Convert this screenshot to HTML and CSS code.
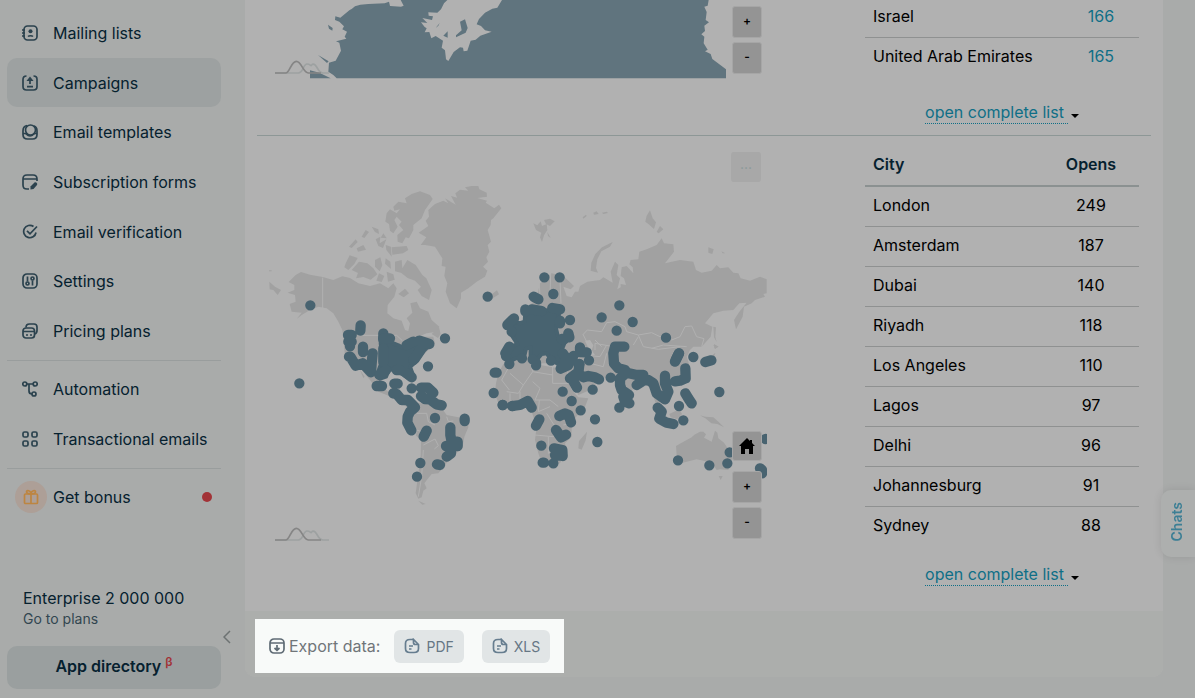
FILE: index.html
```
<!DOCTYPE html>
<html lang="en">
<head>
    <meta charset="UTF-8">
    <meta name="viewport" content="width=device-width, initial-scale=1.0">
    <title>Campaign statistics</title>
    <link rel="stylesheet" href="styles.css">
</head>
<body>
    <div class="layout">
        <aside class="sidebar">
            <nav>
                <div class="menu menu-main">
                    <a class="menu-item" href="#">
                        <svg class="icon" viewBox="0 0 16 16"><rect x="2" y="1" width="13" height="14" rx="3.5"/><path d="M0 5h3M0 8h3M0 11h3M6 11.5c1-1 4-1 5 0"/><circle cx="8.5" cy="6.2" r="2" class="solid"/></svg>
                        Mailing lists
                    </a>
                    <a class="menu-item active" href="#">
                        <svg class="icon" viewBox="0 0 16 16"><path d="M4.5 1C2 1 1 2.200 1 4.500v7C1 14 2 15 4.500 15h7c2.500 0 3.500-1 3.500-3.500v-7C15 2.200 14 1 11.500 1M8 9V3M5 11.700h6"/><path class="solid" d="M8 1.500l3.500 4.500h-7z"/></svg>
                        Campaigns
                    </a>
                    <a class="menu-item" href="#">
                        <svg class="icon" viewBox="0 0 16 16"><circle cx="8.500" cy="6" r="5"/><path d="M5 1.500C2 2 1 4 1 7v3.500C1 14 2.500 15 5.500 15h5c3 0 4.500-1 4.500-4.500V7c0-2.500-1-4.500-3-5M1 9.500h2.500c1 0 1.500 2.500 4.500 2.500s3.500-2.500 4.500-2.500H15"/></svg>
                        Email templates
                    </a>
                    <a class="menu-item" href="#">
                        <svg class="icon" viewBox="0 0 16 16"><path d="M7 15H5c-3 0-4-1-4-4V5c0-3 1-4 4-4h6c3 0 4 1 4 4v2M1 5h14"/><path class="solid" d="M8.500 15.500v-3l4-4c1.500-1 3.500 1 2.500 2.500l-3.500 4z"/></svg>
                        Subscription forms
                    </a>
                    <a class="menu-item" href="#">
                        <svg class="icon" viewBox="0 0 16 16"><path d="M11.500 2.500A6.200 6.200 0 1 0 14 8.500M5 6.800l3 3L15 2.500"/></svg>
                        Email verification
                    </a>
                    <a class="menu-item" href="#">
                        <svg class="icon" viewBox="0 0 16 16"><rect x="1" y="1" width="14" height="14" rx="4"/><path d="M5.500 3.500v5M10.500 7.500v5"/><circle cx="5.500" cy="10.500" r="1.500"/><circle cx="10.500" cy="5.500" r="1.500"/></svg>
                        Settings
                    </a>
                    <a class="menu-item" href="#">
                        <svg class="icon" viewBox="0 0 16 16"><rect x="1" y="5" width="11.500" height="10" rx="3"/><path d="M4 4.500C4 2 5 1 7.500 1H12c2 0 3 1 3 3v3.500c0 2-.5 3-2.300 3.500M1 8.500h11.500M4 12h2M8 12h2"/></svg>
                        Pricing plans
                    </a>
                </div>
                <div class="menu">
                    <a class="menu-item" href="#">
                        <svg class="icon" viewBox="0 0 16 16"><circle cx="2.800" cy="3" r="2"/><circle cx="13.200" cy="3" r="2"/><circle cx="12" cy="13" r="2"/><path d="M5 3h6M7 3v7c0 2 1 3 3 3"/></svg>
                        Automation
                    </a>
                    <a class="menu-item" href="#">
                        <svg class="icon" viewBox="0 0 16 16"><rect x="1" y="1" width="5" height="5" rx="1.500"/><rect x="10" y="1" width="5" height="5" rx="1.500"/><rect x="1" y="10" width="5" height="5" rx="1.500"/><rect x="10" y="10" width="5" height="5" rx="1.500"/></svg>
                        Transactional emails
                    </a>
                </div>
                <div class="menu">
                    <a class="menu-item bonus" href="#">
                        <span class="bonus-icon"><svg class="icon" viewBox="0 0 16 16"><rect x="1.500" y="5" width="13" height="9.500" rx="1"/><path d="M8 5v9.500M8 5C6.500 5 3.500 4.500 3.500 2.800S7.500 1 8 5c.5-4 4.500-4 4.500-2.200S9.500 5 8 5"/></svg></span>
                        Get bonus
                        <span class="red-dot"></span>
                    </a>
                </div>
            </nav>
            <div class="plan">
                <div class="plan-name">Enterprise 2 000 000</div>
                <a class="plan-link" href="#">Go to plans</a>
                <button class="collapse" type="button" aria-label="Collapse menu">
                    <svg viewBox="0 0 8 14"><path d="M7 1L1 7l6 6"/></svg>
                </button>
            </div>
            <button class="app-directory" type="button">App directory <sup>β</sup></button>
        </aside>

        <main class="report">
            <section class="row">
                <div class="map-col">
                    <div class="map">
                        <svg class="map-svg" viewBox="42 0 1494 237">
                            <path class="zone" d="M245 235L235 225 220 215 222 188 242 182 258 152 253 128 243 124 274 116 269 110 276 95 262 88 267 79 253 65 240 60 241 49 256 53 284 30 290 27 300 19 316 14 340 12 389 10 402 5 405 18 438 20 446 17 437 0H577L567 10 558 28 547 38 520 37 521 47 534 49 531 60 502 54 517 69 498 67 509 81 515 85 509 97 523 96 529 115 542 108 564 122 560 143 570 151 573 178 580 183 596 156 615 142 624 143 626 154 637 152 647 122 662 119 676 107 710 95 690 91 678 78 665 73 672 57 690 38 712 26 727 23 741 0H1361L1358 17 1348 20 1355 36 1352 60 1362 67 1348 77 1350 93 1339 103 1348 110 1346 130 1358 149 1350 154 1367 162 1372 177 1413 208V235ZM165 235V211L193 218 227 235ZM189 165L221 184 216 189ZM219 74L233 84 232 92 222 86ZM565 107L578 94V113Z"/>
                            <path class="zone" d="M615 65L630 58 638 84 632 98 603 112 603 106 620 91ZM542 84L554 69 550 77Z"/>
                            <path class="squiggle" d="M60 219h70c15 0 14-27 26-27s10 10 16 1c15-5 14 26 32 26h18"/>
                            <path class="squiggle dark" d="M60 219h32c12 0 16-35 32-35s20 35 36 35h38"/>
                        </svg>
                        <div class="zoom-control">
                            <button class="map-btn" type="button">+</button>
                            <button class="map-btn" type="button">-</button>
                        </div>
                    </div>
                </div>
                <div class="table-col">
                    <table class="stats countries">
                        <tbody>
                            <tr><td>Israel</td><td><a href="#">166</a></td></tr>
                            <tr><td>United Arab Emirates</td><td><a href="#">165</a></td></tr>
                        </tbody>
                    </table>
                    <div class="more"><a class="more-link" href="#">open complete list</a><span class="caret"></span></div>
                </div>
            </section>

            <section class="row">
                <div class="map-col">
                    <div class="map">
                        <svg class="map-svg" viewBox="42 6 1494 1176">
                            <!-- North America and Greenland -->
                            <g class="land">
                                <path d="M101 396L122 375 138 366 165 374 203 381 235 390 262 379 285 384 310 400 345 408 375 400 400 415 415 400 425 415 418 440 398 465 397 490 415 505 440 512 450 540 460 543 465 520 455 505 472 488 466 460 485 455 495 475 520 485 530 510 553 530 545 545 515 550 490 560 535 560 540 580 500 620 470 655 480 690 462 690 430 665 400 665 380 690 380 710 400 725 420 700 425 740 450 755 480 770 460 775 420 745 370 725 345 690 320 660 290 650 270 620 265 560 262 540 250 515 235 490 215 475 190 470 165 480 140 495 125 507 140 488 110 485 104 462 122 455 120 435 98 428 118 420 118 405Z"/>
                                <path d="M43 395L60 410 78 420 68 435 55 420 44 418ZM42 361h8v3h-8ZM315 660l14 20-4 4ZM530 552l22-20 5 20-8 12ZM706 436l20-15 6 12-22 14Z"/>
                                <path d="M491 248L520 228 512 212 522 200 520 180 540 162 565 152 580 160 570 145 602 164 588 138 606 143 601 130 615 119 640 122 630 112 650 108 670 108 673 118 695 128 696 140 667 144 696 152 692 158 718 175 732 164 739 175 715 205 708 210 707 225 698 240 708 275 698 285 703 305 694 322 699 335 684 350 697 362 690 380 665 395 640 415 618 428 618 445 605 475 585 460 572 425 577 400 568 378 572 350 560 348 562 325 540 290 510 285 497 285 514 262Z"/>
                                <path d="M415 170L430 155 455 160 450 145 470 132 495 124 525 135 533 147 510 180 500 205 475 225 475 240 462 265 452 262 442 280 428 275 427 255 445 240 432 225 440 215 425 200 418 210 428 230 415 250 405 242 402 222 391 215 395 190 405 178 425 190 435 178 418 182ZM350 230l20 8 2 14-12-6ZM385 250l10 15-18-2ZM282 290l20-22 6 8-18 18ZM305 295l20-10 8 14-24 6ZM332 240l10 6-14 18-8-4ZM362 268l14-8-2 20 20-12-10 26-14-6ZM392 285l16 5 2 30-16-20ZM410 292l45-4 5 12-16 10-32 4Z"/>
                                <path d="M272 340l12-24 24 8-10 18-18 18-12-8ZM290 360l22-25 25 5 18 15 12 18-20 16-22-8-22 4 6-16ZM360 330l16-8 6 24-8 18-14-14ZM392 325l14 10 2 22-18-16ZM372 370l16 8-8 18-16-4ZM395 365l20 8 4 16-20 6ZM420 335l20-5 2 25 15-25 25 15 20 30 12 10 16 35-8 30-22-12-12-18 10-10-18-18-22-8-20-16-18-4ZM430 432l20-16 12 14-16 12Z"/>
                            </g>
                            <!-- South America -->
                            <g class="land" transform="translate(0 570)">
                                <path d="M480 190L510 190 560 205 575 225 610 232 640 240 640 262 628 290 622 325 590 350 570 375 550 400 530 402 522 412 508 430 515 445 505 452 500 472 490 476 482 460 490 400 497 350 498 300 470 275 455 245 465 215ZM490 482l22 10-10 2Z"/>
                            </g>
                            <!-- Eurasia -->
                            <g class="land" transform="translate(735 0)">
                                <path d="M85 470L110 445 120 400 155 370 190 378 222 408 212 418 190 410 200 438 215 442 225 425 235 425 240 408 262 395 300 390 310 382 338 398 332 365 345 335 355 345 350 375 360 385 352 418 362 412 362 402 378 405 372 385 362 378 365 352 380 348 400 370 398 352 388 343 392 330 415 328 418 305 440 298 470 285 485 265 492 280 520 283 522 305 495 340 540 330 580 335 588 360 605 368 635 362 650 345 660 355 685 352 700 368 715 370 722 385 750 392 780 380 800 388 800 430 790 432 795 440 765 450 755 460 732 470 728 500 708 538 702 510 718 485 740 458 718 460 700 480 670 482 640 490 615 520 637 530 632 560 605 590 580 590 570 600 560 620 570 650 555 690 520 700 500 710 515 740 490 750 475 730 485 790 470 770 455 720 430 690 400 710 385 765 365 740 350 690 300 680 265 670 298 690 270 720 235 735 215 690 195 650 150 640 110 640 30 640 10 620 60 590 30 560 40 530 80 510Z"/>
                                <path d="M100 220l12 6 10-12 4 14 14-6 2 18-10 16-6 20-6-14 4-14-16-8ZM132 210l18-4 14 8-14 14-12-6ZM142 246l10 18-8-6ZM280 188l10-4 6 8-14 2ZM248 202l10-8 2 4-10 8ZM306 188l14-3 4 4-14 3ZM436 215l4-18 10-16 8 24 10 12-6 20-16-14ZM470 246l10-18 10 10-14 12ZM272 362l2-24 12-26 20-20 32-16-8 14-26 14-12 24-4 26 6 14ZM625 292l16 6-4 14-12-4ZM664 304l12 6-8 0ZM640 530l8 2-2 28 4 16-8-14ZM642 582l14 8-12 6Z"/>
                            </g>
                            <!-- Africa, Indonesia, Australia -->
                            <g class="land" transform="translate(735 570)">
                                <path d="M-12 130L-5 100 10 72 60 60 110 60 120 75 150 80 175 85 200 90 205 120 215 150 235 172 265 175 255 200 225 235 215 260 215 290 195 310 200 335 180 370 130 382 115 340 105 300 110 260 95 215 80 195 30 205 -5 190 -15 160ZM235 325l2-22 24-28-4 26-12 28Z"/>
                                <path d="M528 318L545 308 575 292 583 284 600 275 610 275 618 283 612 293 635 305 645 272 652 278 655 295 672 308 690 335 698 355 685 390 660 388 650 390 640 375 625 365 590 358 560 365 535 372 530 345ZM656 408h12l-6 12ZM600 226l16 4 24 2 16 14 16 16-20-10-18-2-16-14ZM508 222l30-14 8 14-14 16-20-6ZM460 205l40 40 30 14-34-6ZM632 50l14-12-6 22-20 12ZM640 15l14 4-8 8Z"/>
                            </g>
                            <!-- country borders -->
                            <path class="border" d="M203 383V475M308 556H425L442 572M485 790l30 0 5 25 20 10M500 845l-15-5-5 20M505 885l35-18 10 20-12 10M505 900l-5 80-10 60M575 800l5 15 15-2"/>
                            <path class="border" transform="translate(735 0)" d="M118 402L120 440M152 372L150 440M180 390L183 460M248 555L262 540 305 545 320 518 345 515 375 530 380 545 415 555 455 548 480 560 515 570 540 560 555 530 575 528 590 560 612 566 605 590M415 555L430 590 475 598 540 590M285 600V580L340 590M250 555L260 575M400 585L415 560"/>
                            <path class="border" transform="translate(735 570)" d="M30 75L5 120 28 150M30 100L70 135 98 95 92 70M98 95L158 105V78M158 105V130H215M70 135L55 160 20 155M98 125L120 145 105 180 150 180 175 200M118 180L115 215 150 200M30 160V195M60 155V190M105 285L160 290 165 260 140 220M145 290V340L175 320M190 255L215 250M250 45L300 50 320 15M270 70L310 80 320 40M285 0L305 20M455 25L490 15 560 20"/>
                            <path class="water" d="M990 572l15-2 10 16-5 15 10 14-14 2-6-22Z"/>
                            <!-- opens -->
                            <path class="dots" d="M166 466h0M698 440h0M570 565h0M317 526l-1 16M385 550v20M279 555h11M280 575h10M285 585v4"/>
                            <path class="dots" transform="translate(0 570)" d="M133 130h0M519 79h0M719 98h6M716 159h0M743 195h0M772 198h0M282 50h4L302 77 323 70 348 97 350 70 353 40M324 20v16M365 138h16M418 131h10M415 160l10 2 15 18h19l21 22-15 13-7 15-1 18 12 23M470 145h0M498 143h21l16 15M498 168l12 9 15 1 20 15 15 3M540 234h0M629 236v7M586 262v23l4 20h18v13H573M588 340l-13 10M515 272l-9 18M496 369h0M546 373l9 2M486 410h0M588 320v20"/>
                            <path class="dots" transform="translate(735 0)" d="M358 466h0M305 502h0M398 516h0M350 542h0M498 563h0M537 610l-10 20"/>
                            <path class="dots" transform="translate(735 570)" d="M8 195h0M37 198l23-3 23-12 12 20M118 238l-10 19M124 317h0M128 368h4M160 370h0M168 270l15 22 15-8M162 325l25 5 1 18-23-3M178 228l17-8 11 5 7 22M215 183h0M242 211h0M285 238h0M292 306h0M188 155h0M278 149h0M218 120l13 23M238 73l-3 27 15 12 15-4 20 4 12 6M210 115l20-15M332 113h0M373 20h-28l-5 20 2 30 13 15 20 5 5 8-20 17v20l5 15 22 15-17 5 5 15 13 5M358 203h0M380 98l30 7 20 0M410 135l20-13 15-2 15 10 10 30 25 18 10-23-10-25V107M525 124l15-2 17-7-1-30M537 40l-12 25M580 51h0M616 66l18-5M556 160l9 15 10 15M537 198h0M473 203l12 12-7 21 22 12 20 4M550 241h0M658 156h0M534 361h0M628 376h0M682 370h0M689 337h0M797 297h0M780 385l6 5v10"/>
                            <!-- dense areas: United States, Europe -->
                            <g transform="translate(225 480)">
                                <path class="mass" d="M152 100L178 95 205 106 216 112 235 95 268 84 290 92 298 106 282 122 262 152 240 170 250 198 235 204 205 185 190 180 178 176 168 200 150 206 140 198 152 165 155 125Z"/>
                                <path class="dots" d="M160 85h20M268 92l30 10M245 202l-15-12M200 180h10M148 195l20-15M160 115v40M250 95l-20 10M270 120l-20 30"/>
                            </g>
                            <g transform="translate(675 360)">
                                <path class="mass" d="M136 125L215 120 238 120 235 150 228 175 235 205 255 215 245 240 262 265 245 290 228 278 213 268 200 250 185 252 165 275 152 258 152 232 138 236 132 262 108 265 88 275 78 250 90 232 112 222 92 190 88 165 100 152 118 160 134 155Z"/>
                                <path class="dots" d="M193 22h0M239 22h0M220 72h0M161 80l14 8M136 118v6M155 118l30 5M217 114l23 4M240 152v8M270 150h0M102 145l-20 20M95 185h0M265 190l3 12M245 207h8M88 230l-12 20M88 282h0M78 258h0M126 265h0M168 286v-8M158 268h0M213 272h0M248 250l14 20-20 26 22-10 16-28M300 232v14l20 1M327 271h0M298 282h0"/>
                            </g>
                            <path class="squiggle" d="M60 1170h70c15 0 14-27 26-27s10 10 16 1c15-5 14 26 32 26h18"/>
                            <path class="squiggle dark" d="M60 1170h32c12 0 16-35 32-35s20 35 36 35h38"/>
                        </svg>
                        <button class="map-menu" type="button" aria-label="Export map">···</button>
                        <div class="zoom-control">
                            <button class="map-btn home" type="button" aria-label="Home"><svg viewBox="0 0 16 16"><path d="M8 0L0 8h2v8h4v-5h4v5h4V8h2L13 5V2h-2v1z"/></svg></button>
                            <button class="map-btn" type="button">+</button>
                            <button class="map-btn" type="button">-</button>
                        </div>
                    </div>
                </div>
                <div class="table-col">
                    <table class="stats cities">
                        <thead>
                            <tr><th>City</th><th>Opens</th></tr>
                        </thead>
                        <tbody>
                            <tr><td>London</td><td>249</td></tr>
                            <tr><td>Amsterdam</td><td>187</td></tr>
                            <tr><td>Dubai</td><td>140</td></tr>
                            <tr><td>Riyadh</td><td>118</td></tr>
                            <tr><td>Los Angeles</td><td>110</td></tr>
                            <tr><td>Lagos</td><td>97</td></tr>
                            <tr><td>Delhi</td><td>96</td></tr>
                            <tr><td>Johannesburg</td><td>91</td></tr>
                            <tr><td>Sydney</td><td>88</td></tr>
                        </tbody>
                    </table>
                    <div class="more"><a class="more-link" href="#">open complete list</a><span class="caret"></span></div>
                </div>
            </section>

            <footer class="report-footer">
                <div class="export">
                    <svg class="icon" viewBox="0 0 16 16"><rect x="1" y="1" width="14" height="14" rx="4"/><path d="M1 5h14M8 7v5M5.500 10L8 12.300 10.500 10"/></svg>
                    <span class="export-label">Export data:</span>
                    <button class="export-btn" type="button">
                        <svg class="icon" viewBox="0 0 16 16"><path d="M9.500 1.500H6c-3 0-4.500 1-4.500 4v5c0 3 1.500 4 4.500 4h4c3 0 4.500-1 4.500-4v-4l-5-5v3c0 1.500.5 2 2 2h3M5 8h4M5 11h2.500"/></svg>
                        PDF
                    </button>
                    <button class="export-btn" type="button">
                        <svg class="icon" viewBox="0 0 16 16"><path d="M9.500 1.500H6c-3 0-4.500 1-4.500 4v5c0 3 1.500 4 4.500 4h4c3 0 4.500-1 4.500-4v-4l-5-5v3c0 1.500.5 2 2 2h3M5 8h4M5 11h2.500"/></svg>
                        XLS
                    </button>
                </div>
            </footer>
        </main>
    </div>
    <button class="chats" type="button"><span>Chats</span></button>
</body>
</html>
```
FILE: styles.css
```
* {
    box-sizing: border-box;
}
body {
    margin: 0;
    font-family: Inter, "Liberation Sans", sans-serif;
    font-size: 16px;
    line-height: 20px;
    color: #000;
    background: #a9abaa;
    overflow: hidden;
}
a {
    color: #0f6f87;
    text-decoration: none;
}
button {
    font-family: inherit;
    border: none;
    padding: 0;
    cursor: pointer;
}
.layout {
    display: flex;
    align-items: flex-start;
    min-height: 100vh;
}

/* sidebar */
.sidebar {
    display: flex;
    flex-direction: column;
    flex: 0 0 245px;
    min-width: 0;
    height: 100vh;
    padding: 8px 24px 9px 7px;
}
.menu-main {
    display: grid;
    grid-auto-rows: 1fr;
    height: 348px;
}
.menu + .menu {
    margin-top: 4px;
    padding-top: 3px;
    border-top: 1px solid #999d9d;
}
.menu + .menu .menu-item {
    height: 50px;
}
.menu-item {
    display: flex;
    align-items: center;
    gap: 15px;
    padding: 0 12px 0 15px;
    border-radius: 10px;
    color: #06212f;
    white-space: nowrap;
}
.menu-item.active {
    background: #9da1a1;
}
.icon {
    width: 16px;
    height: 16px;
    fill: none;
    stroke: #2b424e;
    stroke-width: 1.7;
    flex: none;
}
.icon .solid {
    fill: #2b424e;
    stroke: none;
}
.menu-item.bonus {
    gap: 6px;
    padding: 0 9px 0 8px;
}
.bonus-icon {
    display: flex;
    align-items: center;
    justify-content: center;
    width: 32px;
    height: 32px;
    border-radius: 50%;
    background: #ad9f97;
}
.bonus-icon .icon {
    stroke: #bd8541;
}
.red-dot {
    width: 10px;
    height: 10px;
    margin-left: auto;
    border-radius: 50%;
    background: #a23236;
}
.plan {
    position: relative;
    margin-top: auto;
    padding: 0 16px 17px;
}
.plan-name {
    color: #06212f;
    line-height: 22px;
}
.plan-link {
    display: block;
    font-size: 14px;
    color: #324650;
}
.collapse {
    position: absolute;
    right: -11px;
    bottom: 2px;
    width: 12px;
    height: 14px;
    background: none;
}
.collapse svg {
    display: block;
    width: 8px;
    height: 14px;
    margin-left: 3px;
    fill: none;
    stroke: #6d7272;
    stroke-width: 1.5;
}
.app-directory {
    height: 43px;
    padding-bottom: 3px;
    border-radius: 10px;
    background: #9a9f9f;
    color: #06212f;
    font-size: 16px;
    font-weight: 600;
}
.app-directory sup {
    color: #a23236;
    font-size: 12px;
    line-height: 0;
}

/* report */
.report {
    flex: 1;
    min-width: 0;
    margin-right: 32px;
    background: #b1b1b1;
    border-radius: 0 0 10px 10px;
}
.row {
    display: flex;
    margin: 0 12px;
}
.row + .row {
    border-top: 1px solid #8d9796;
}
.map-col {
    flex: 1;
    min-width: 0;
    padding: 0 98px 0 12px;
}
.row + .row .map-col {
    padding-top: 16px;
}
.map {
    position: relative;
}
.map-svg {
    display: block;
    width: 100%;
}
.zone {
    fill: #60747e;
}
.land {
    fill: #a1a1a1;
}
.border {
    fill: none;
    stroke: #b1b1b1;
    stroke-width: 3;
}
.water {
    fill: #b1b1b1;
}
.dots {
    fill: none;
    stroke: #486370;
    stroke-width: 31;
    stroke-linecap: round;
    stroke-linejoin: round;
}
.mass {
    fill: #486370;
    stroke: #486370;
    stroke-width: 12;
    stroke-linejoin: round;
}
.squiggle {
    fill: none;
    stroke: #9da1a1;
    stroke-width: 5;
}
.squiggle.dark {
    stroke: #858585;
}
.zoom-control {
    position: absolute;
    right: 5px;
    bottom: 5px;
    display: flex;
    flex-direction: column;
    gap: 4px;
}
.map-btn {
    width: 30px;
    height: 32px;
    padding-bottom: 3px;
    border: 1px solid #a6a6a6;
    border-radius: 3px;
    background: #949494;
    color: #000;
    font-size: 12px;
    font-weight: 600;
}
.map-btn.home {
    height: 30px;
    margin-bottom: 6px;
    padding: 0;
}
.home svg {
    display: block;
    width: 16px;
    height: 16px;
    margin: 0 auto;
}
.map-menu {
    position: absolute;
    top: 0;
    right: 6px;
    width: 30px;
    height: 30px;
    border-radius: 3px;
    background: #a8a8a8;
    color: #8a9999;
    font-size: 14px;
}
.table-col {
    flex: 0 0 274px;
    margin-right: 12px;
}
.row + .row .table-col {
    padding-top: 9px;
}
.stats {
    width: 100%;
    border-collapse: separate;
    border-spacing: 0;
    table-layout: fixed;
}
.stats th {
    height: 42px;
    padding: 0 8px 3px;
    border-bottom: 2px solid #8b9191;
    color: #06212f;
    font-weight: 600;
    text-align: left;
}
.stats td {
    height: 40px;
    padding: 0 8px 3px;
    border-bottom: 1px solid #8f9191;
}
.stats tr:last-child td {
    border-bottom-color: transparent;
}
.stats th:last-child,
.stats td:last-child {
    width: 96px;
    text-align: center;
}
.countries {
    margin-top: -2px;
}
.countries td:last-child {
    width: 76px;
}
.more {
    display: flex;
    align-items: center;
    justify-content: center;
    gap: 3px;
    padding: 24px 0 11px;
}
.row + .row .more {
    padding: 17px 0 25px;
}
.more-link {
    padding: 0 4px 1px 0;
    border-bottom: 1px dotted #0f6f87;
}
.caret {
    margin-top: 5px;
    border: 4px solid transparent;
    border-top-color: #000;
    border-bottom: none;
}
.report-footer {
    padding: 8px 10px 4px;
    background: #acaeac;
    border-radius: 0 0 10px 10px;
}
.export {
    display: inline-flex;
    align-items: center;
    height: 54px;
    padding: 0 14px;
    background: #f8faf9;
    vertical-align: top;
}
.export .icon {
    stroke: #5f6b75;
}
.export-label {
    margin: 0 14px 0 4px;
    color: #707579;
}
.export-btn {
    display: flex;
    align-items: center;
    gap: 6px;
    height: 33px;
    padding: 0 10px;
    border-radius: 6px;
    background: #e1e5e6;
    color: #667785;
    font-size: 14px;
}
.export-btn + .export-btn {
    margin-left: 18px;
}
.export .export-btn .icon {
    stroke: #667d8f;
}

/* chats tab */
.chats {
    position: fixed;
    right: 0;
    top: 490px;
    width: 34px;
    height: 67px;
    padding-right: 3px;
    border-radius: 10px 0 0 10px;
    background: #adafae;
    box-shadow: 0 0 8px rgba(0,0,0,0.1);
    color: #3d7f95;
    font-size: 14px;
    font-weight: 600;
}
.chats span {
    writing-mode: vertical-rl;
    transform: rotate(180deg);
}
```
